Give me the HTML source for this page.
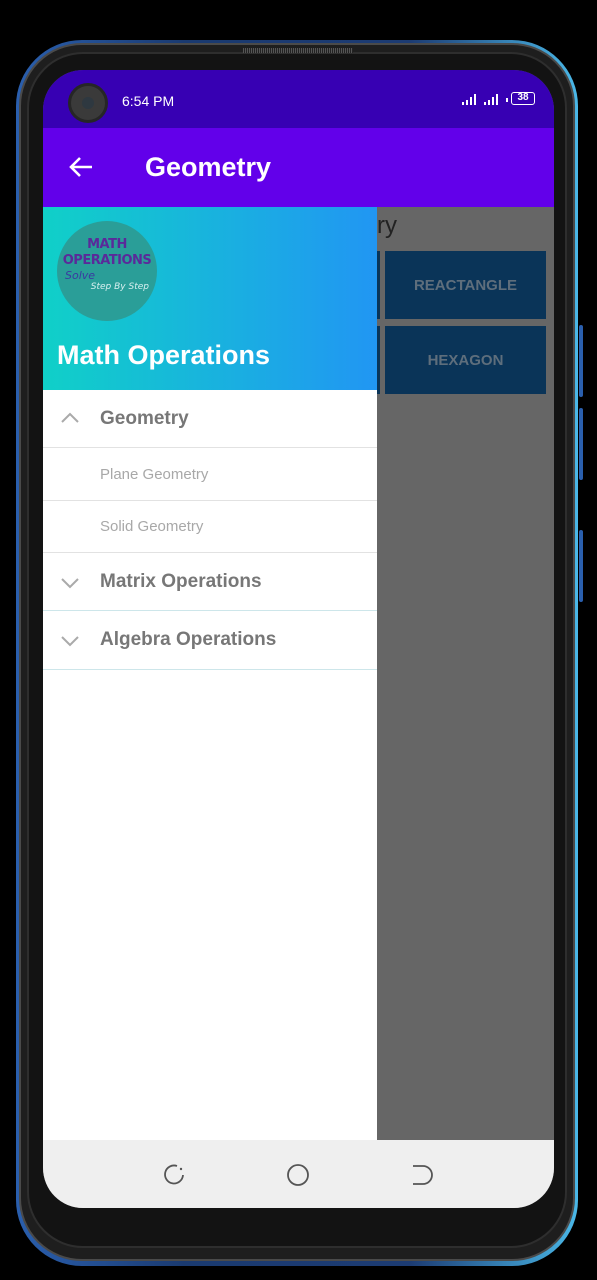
<!DOCTYPE html>
<html><head><style>
*{margin:0;padding:0;box-sizing:border-box}
body{width:597px;height:1280px;background:#000;position:relative;overflow:hidden;font-family:"Liberation Sans",Roboto,sans-serif}
.abs{position:absolute}
.outer{left:16px;top:40px;width:562px;height:1226px;border-radius:66px;background:linear-gradient(90deg,#2a5fae,#1a3a70 30%,#1c3b72 70%,#4ab8e8);}
.mid{left:19px;top:43px;width:556px;height:1218px;border-radius:63px;background:#1e1e1e;border:2px solid #4a4a4a}
.bez{left:27px;top:52px;width:540px;height:1196px;border-radius:56px;background:#131313;border:2px solid #2e2e2e}
.screen{left:43px;top:70px;width:511px;height:1138px;border-radius:40px;overflow:hidden;background:#666}
.status{left:0;top:0;width:511px;height:58px;background:#3700b3;color:#fff;font-size:14px}
.tool{left:0;top:58px;width:511px;height:79px;background:#6200ea;color:#fff}
.btn{background:#0a3458;color:#5e6e7c;font-weight:bold;font-size:15px;display:flex;align-items:center;justify-content:center}
.drawer{left:0;top:137px;width:334px;height:933px;background:#fff}
.head{left:0;top:0;width:334px;height:183px;background:linear-gradient(90deg,#10d0c8,#2196f3)}
.row{position:absolute;left:0;width:334px;border-bottom:1px solid #e2e2e2}
.big{color:#777;font-weight:bold;font-size:19px;position:absolute;left:57px}
.small{color:#a8a8a8;font-size:15px;position:absolute;left:57px}
.nav{left:0;top:1070px;width:511px;height:68px;background:#efefef}
</style></head><body>
<div class="abs outer"></div>
<div class="abs mid"></div>
<div class="abs bez"></div>
<div class="abs" style="left:243px;top:48px;width:110px;height:5px;background:repeating-linear-gradient(90deg,#555 0 1px,#222 1px 2px)"></div>
<div class="abs" style="left:579px;top:325px;width:4px;height:72px;background:#2a5fae;border-radius:2px"></div>
<div class="abs" style="left:579px;top:408px;width:4px;height:72px;background:#2a5fae;border-radius:2px"></div>
<div class="abs" style="left:579px;top:530px;width:4px;height:72px;background:#2a5fae;border-radius:2px"></div>
<div class="abs screen">
 <div class="abs status">
  <div class="abs" style="left:25px;top:13px;width:40px;height:40px;border-radius:50%;background:#3a3a3a;border:3px solid #262626"><div style="margin:11px auto;width:12px;height:12px;border-radius:50%;background:#2e3840"></div></div>
  <div class="abs" style="left:79px;top:23px">6:54 PM</div>
  <svg class="abs" style="left:418px;top:23px" width="72" height="14"><g fill="#fff"><rect x="1" y="9" width="2" height="3"/><rect x="5" y="7" width="2" height="5"/><rect x="9" y="4" width="2" height="8"/><rect x="13" y="1" width="2" height="11"/><rect x="23" y="9" width="2" height="3"/><rect x="27" y="7" width="2" height="5"/><rect x="31" y="4" width="2" height="8"/><rect x="35" y="1" width="2" height="11"/><rect x="45" y="5" width="2" height="4"/></g></svg>
  <div class="abs" style="left:468px;top:22px;width:24px;height:13px;border:1.5px solid #fff;border-radius:3px;font-size:10px;text-align:center;line-height:10px;font-weight:bold">38</div>
 </div>
 <div class="abs tool">
  <svg class="abs" style="left:25px;top:27px" width="26" height="24" viewBox="0 0 26 24"><path d="M24 12H3M12 3L3 12l9 9" stroke="#fff" stroke-width="2.6" fill="none"/></svg>
  <div class="abs" style="left:102px;top:24px;font-size:27px;font-weight:bold">Geometry</div>
 </div>
 <div class="abs" style="left:334px;top:142px;font-size:24px;color:#222">ry</div>
 <div class="abs btn" style="left:342px;top:181px;width:161px;height:68px">REACTANGLE</div>
 <div class="abs btn" style="left:342px;top:256px;width:161px;height:68px">HEXAGON</div>
 <div class="abs" style="left:334px;top:181px;width:3px;height:68px;background:#0a3458"></div>
 <div class="abs" style="left:334px;top:256px;width:3px;height:68px;background:#0a3458"></div>
 <div class="abs drawer">
  <div class="abs head">
   <div class="abs" style="left:14px;top:14px;width:100px;height:100px;border-radius:50%;background:#2a9e98;text-align:center;font-family:'DejaVu Sans',sans-serif">
    <div style="color:#5a2a9a;font-weight:bold;font-size:13px;margin-top:16px;line-height:16px;letter-spacing:-0.5px">MATH<br>OPERATIONS</div>
    <div style="color:#3a3aa0;font-style:italic;font-size:11px;text-align:left;padding-left:8px;line-height:13px">Solve</div>
    <div style="color:#d8f0f0;font-style:italic;font-size:9px;text-align:right;padding-right:8px">Step By Step</div>
   </div>
   <div class="abs" style="left:14px;top:133px;color:#fff;font-weight:bold;font-size:27px">Math Operations</div>
  </div>
  <div class="row" style="top:183px;height:58px"><svg class="abs" style="left:17px;top:22px" width="20" height="12"><path d="M2 10L10 2l8 8" stroke="#aaa" stroke-width="2" fill="none"/></svg><div class="big" style="top:18px">Geometry</div></div>
  <div class="row" style="top:241px;height:53px"><div class="small" style="top:18px">Plane Geometry</div></div>
  <div class="row" style="top:294px;height:52px"><div class="small" style="top:17px">Solid Geometry</div></div>
  <div class="row" style="top:346px;height:58px;border-color:#cde6ea"><svg class="abs" style="left:17px;top:24px" width="20" height="12"><path d="M2 2l8 8 8-8" stroke="#aaa" stroke-width="2" fill="none"/></svg><div class="big" style="top:18px">Matrix Operations</div></div>
  <div class="row" style="top:404px;height:59px;border-color:#cde6ea"><svg class="abs" style="left:17px;top:24px" width="20" height="12"><path d="M2 2l8 8 8-8" stroke="#aaa" stroke-width="2" fill="none"/></svg><div class="big" style="top:18px">Algebra Operations</div></div>
 </div>
 <div class="abs nav">
  <svg class="abs" style="left:120px;top:23px" width="24" height="24"><path d="M14 3A9 9 0 1 0 20 12" stroke="#555" stroke-width="1.8" fill="none"/><circle cx="18" cy="6" r="1.2" fill="#555"/></svg>
  <svg class="abs" style="left:243px;top:23px" width="24" height="24"><circle cx="12" cy="12" r="10" stroke="#555" stroke-width="1.8" fill="none"/></svg>
  <svg class="abs" style="left:366px;top:23px" width="24" height="24"><path d="M4 3h10a8 8 0 0 1 0 18H4" stroke="#555" stroke-width="1.8" fill="none"/></svg>
 </div>
</div>
</body></html>
